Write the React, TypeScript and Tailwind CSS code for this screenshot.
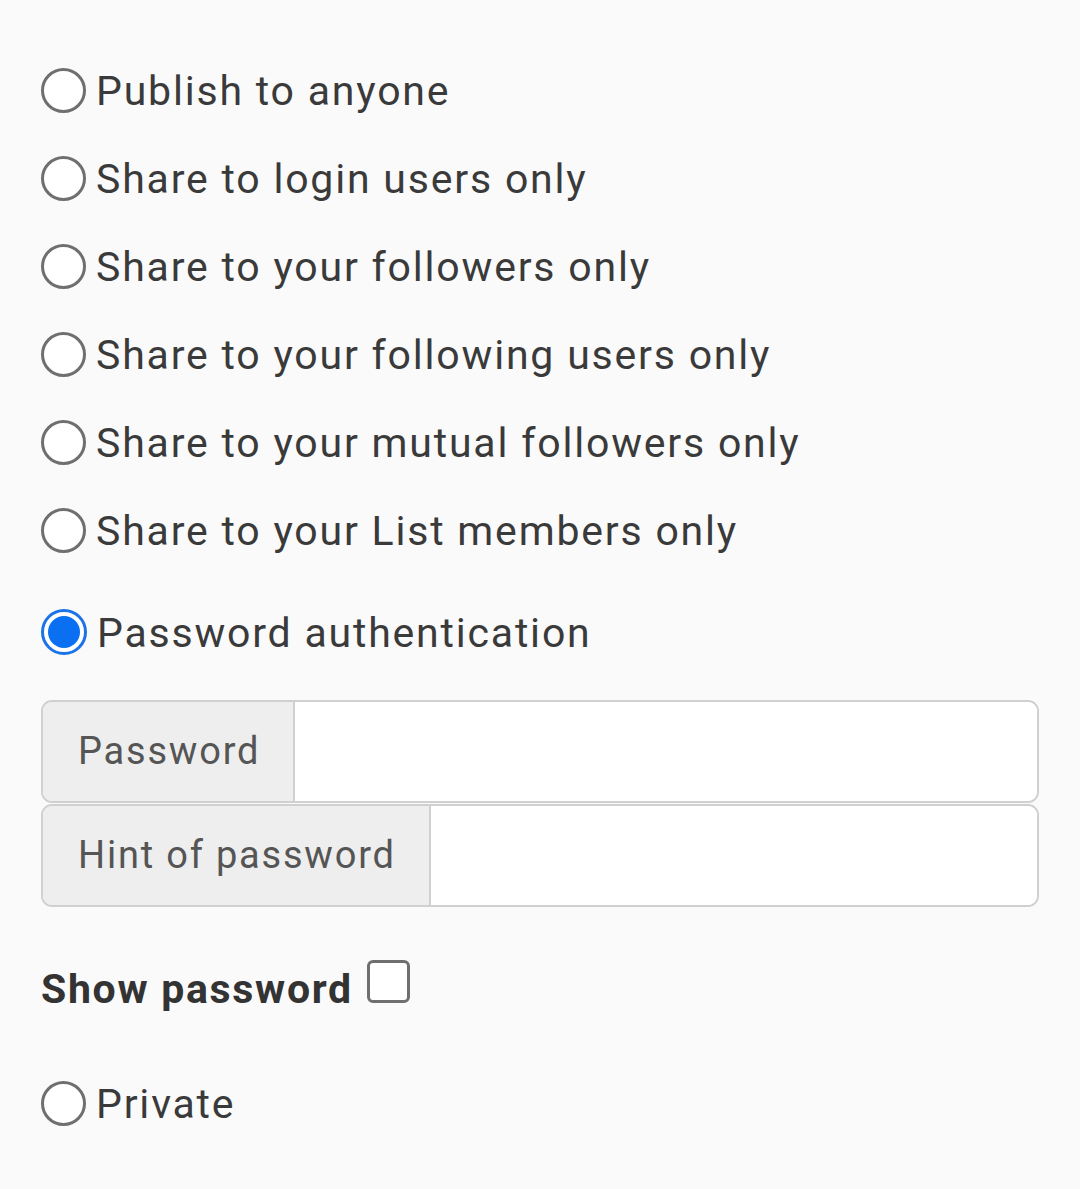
import { useState } from "react";

const options = [
    "Publish to anyone",
    "Share to login users only",
    "Share to your followers only",
    "Share to your following users only",
    "Share to your mutual followers only",
    "Share to your List members only",
];

function Radio({ checked }: { checked?: boolean }) {
    if (checked) {
        return (
            <span className="flex h-[46px] w-[46px] shrink-0 items-center justify-center rounded-full border-[3px] border-[#1a73e8] bg-white">
                <span className="h-[32px] w-[32px] rounded-full bg-[#0b6ff2]"/>
            </span>
        );
    }
    return <span className="h-[45px] w-[45px] shrink-0 rounded-full border-[3px] border-[#6f6f6f] bg-white"/>;
}

function Option({ label, checked, onSelect }: { label: string, checked?: boolean, onSelect: () => void }) {
    return (
        <label className="flex h-[88px] cursor-pointer items-center gap-[10px]" onClick={onSelect}>
            <Radio checked={checked}/>
            <span className="pt-[3px] text-[41px] tracking-[1.8px] text-[#3a3a3a]">{label}</span>
        </label>
    );
}

function InputRow({ label }: { label: string }) {
    return (
        <div className="flex h-[103px] w-full overflow-hidden rounded-[11px] border-2 border-[#d0d0d0]">
            <div className="flex items-center border-r-2 border-[#d0d0d0] bg-[#eeeeee] pl-[35px] pr-[33px] text-[38px] tracking-[1.8px] text-[#555555]">
                {label}
            </div>
            <input className="grow bg-white outline-none" type="text"/>
        </div>
    );
}

export default function App() {
    const [ selected, setSelected ] = useState("password");

    return (
        <div className="min-h-[1189px] w-[1080px] bg-[#fafafa] pl-[41px] pr-[41px] pt-[46px]" style={{ fontFamily: "Roboto, 'Noto Sans', sans-serif" }}>
            {options.map(option => (
                <Option key={option} label={option} checked={selected === option} onSelect={() => setSelected(option)}/>
            ))}
            <div className="mt-[14px]">
                <Option label="Password authentication" checked={selected === "password"} onSelect={() => setSelected("password")}/>
            </div>
            <div className="mt-[24px] flex flex-col gap-[1px]">
                <InputRow label="Password"/>
                <InputRow label="Hint of password"/>
            </div>
            <div className="mt-[52px] flex items-start gap-[14px]">
                <span className="text-[41px] font-bold tracking-[1.7px] text-[#333333]">Show password</span>
                <span className="mt-[1px] h-[43px] w-[43px] rounded-[6px] border-[3px] border-[#6f6f6f] bg-white"/>
            </div>
            <div className="mt-[39px]">
                <Option label="Private" checked={selected === "private"} onSelect={() => setSelected("private")}/>
            </div>
        </div>
    );
}
